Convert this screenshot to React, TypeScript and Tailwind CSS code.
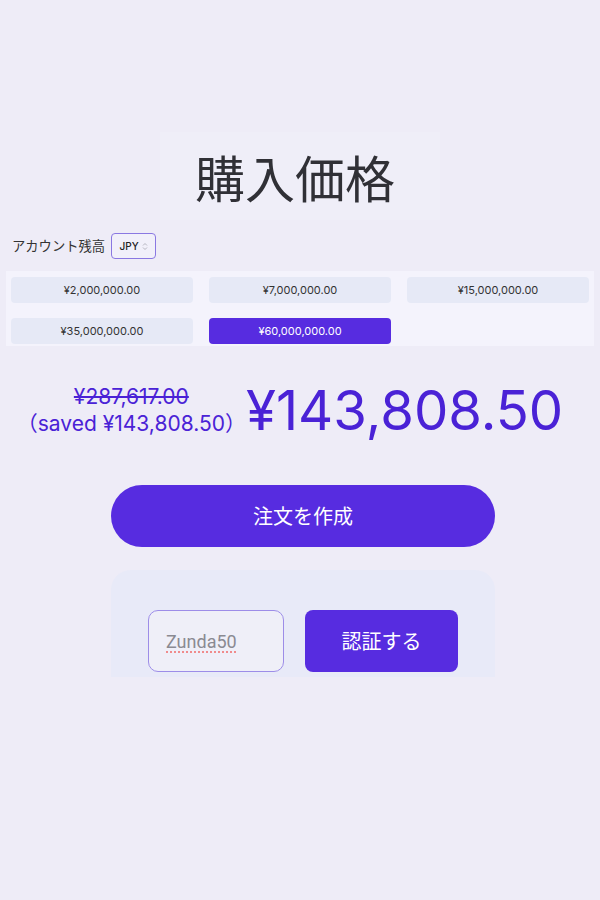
import React from "react";

const FONT = { fontFamily: "Inter, 'Noto Sans CJK JP', sans-serif" };

const options = [
  "¥2,000,000.00",
  "¥7,000,000.00",
  "¥15,000,000.00",
  "¥35,000,000.00",
  "¥60,000,000.00",
];

export default function App() {
  return (
    <div className="min-h-[900px] w-[600px] bg-[#eeecf7] text-[#2d2d33]" style={FONT}>
      <div className="pt-[132px]">
        <div className="mx-auto flex h-[88px] w-[280px] items-center justify-center bg-[#efeef8] pr-[10px]">
          <h1 className="text-[50px] leading-none font-normal text-[#303036]" style={{ fontFamily: "'Noto Sans CJK JP', sans-serif" }}>
            購入価格
          </h1>
        </div>
      </div>

      <div className="mt-[13px] flex h-[26px] items-center gap-[6px] pl-[12px]">
        <span className="text-[13.3px] text-[#333] leading-none" style={{ fontFamily: "'Noto Sans CJK JP', sans-serif" }}>
          アカウント残高
        </span>
        <div className="flex h-[26px] w-[45px] items-center justify-center gap-[3px] rounded-[4px] border border-[#8a78e2] bg-[#f1f0fa]">
          <span className="text-[10px] font-medium text-[#222]">JPY</span>
          <svg width="6" height="9" viewBox="0 0 6 9" fill="none" stroke="#b5b5c0" strokeWidth="1">
            <path d="M1 3.5 L3 1.5 L5 3.5" />
            <path d="M1 5.5 L3 7.5 L5 5.5" />
          </svg>
        </div>
      </div>

      <div className="mx-[6px] mt-[12px] grid h-[75px] grid-cols-3 gap-x-[16px] gap-y-[15px] bg-[#f4f3fc] px-[5px] pt-[6px] pb-[4px]">
        {options.map((o, i) => {
          const sel = i === 4;
          return (
            <div
              key={o}
              className={
                sel
                  ? "flex h-[26px] items-center justify-center rounded-[4px] bg-[#572ce0] text-[11px] text-white"
                  : "flex h-[26px] items-center justify-center rounded-[4px] bg-[#e6e9f6] text-[11px] text-[#333]"
              }
            >
              {o}
            </div>
          );
        })}
      </div>

      <div className="flex h-[124px] items-center justify-center gap-0 pt-[4px] pr-[20px]">
        <div className="flex flex-col items-center text-[#4a22d6]">
          <span className="text-[21px] leading-[27px] line-through">¥287,617.00</span>
          <span className="text-[21px] leading-[27px]">（saved ¥143,808.50）</span>
        </div>
        <div className="text-[54.5px] leading-none text-[#4a22d6]">¥143,808.50</div>
      </div>

      <div className="mx-auto w-[455px] pl-[6px]">
        <div className="pt-[15px]">
          <button className="mx-auto flex h-[62px] w-[384px] items-center justify-center rounded-full bg-[#572ce0] text-[20px] text-white" style={{ fontFamily: "'Noto Sans CJK JP', sans-serif" }}>
            注文を作成
          </button>
        </div>
        <div className="mx-auto mt-[23px] h-[107px] w-[384px] overflow-hidden rounded-t-[20px] bg-[#e8eaf8]">
          <div className="flex gap-[21px] pt-[40px] pl-[37px]">
            <div className="flex h-[62px] w-[136px] items-center rounded-[10px] border border-[#9d8de8] bg-[#efeff8] pl-[17px]">
              <span className="text-[18px] text-[#8a8a92] underline decoration-dotted decoration-[#f08080] underline-offset-[4px]" style={{ fontFamily: "Roboto, sans-serif" }}>
                Zunda50
              </span>
            </div>
            <button className="flex h-[62px] w-[153px] items-center justify-center rounded-[8px] bg-[#572ce0] text-[20px] text-white" style={{ fontFamily: "'Noto Sans CJK JP', sans-serif" }}>
              認証する
            </button>
          </div>
        </div>
      </div>
    </div>
  );
}
